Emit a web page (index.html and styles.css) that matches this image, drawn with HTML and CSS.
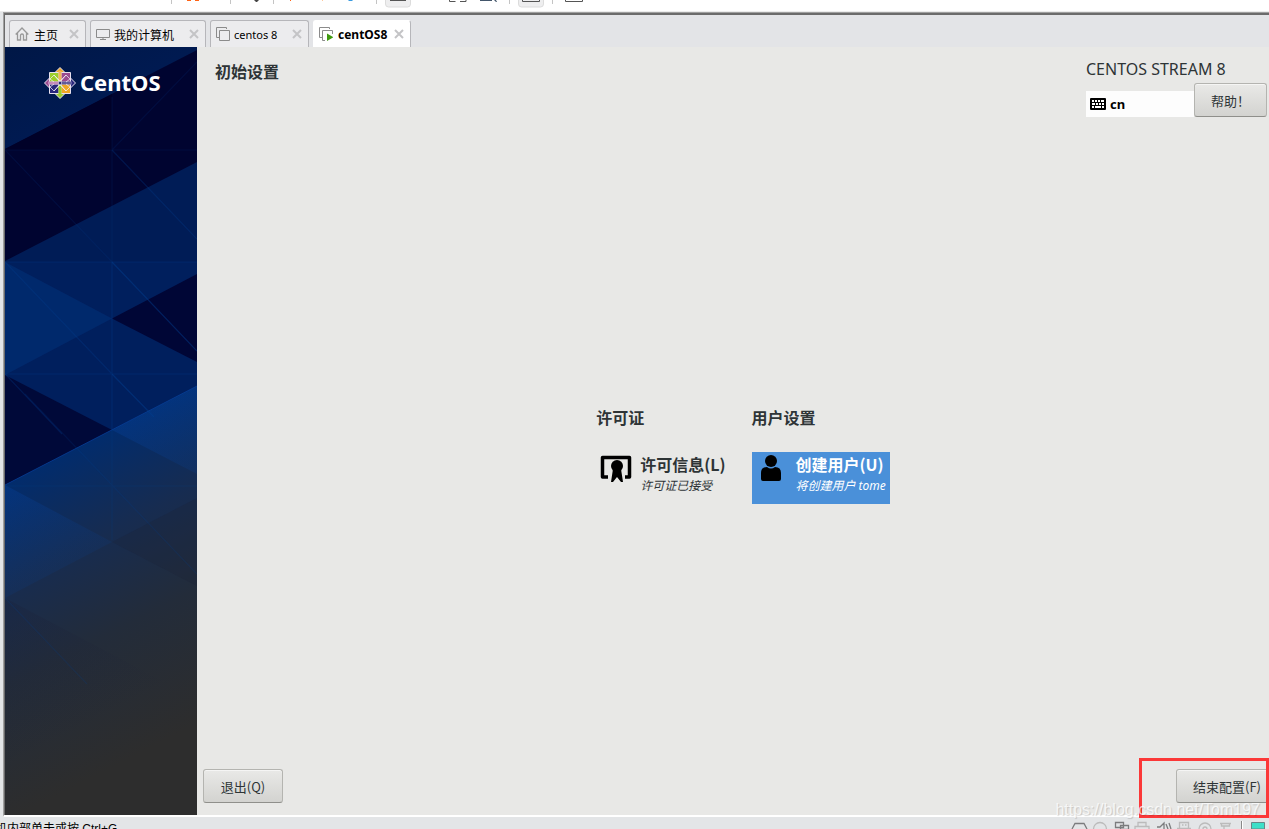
FILE: index.html
```html
<!DOCTYPE html>
<html lang="zh-CN">
<head>
<meta charset="utf-8">
<title>centOS8</title>
<link rel="stylesheet" href="styles.css">
</head>
<body>
<div class="toolbar">
<svg class="toolbar-icons" width="600" height="12" viewBox="0 0 600 12" aria-hidden="true">
<path d="M171.500 0v4M230.500 0v4M273.500 0v4M376.500 0v4M509.500 0v4M552.500 0v4" stroke="#c4c4c4"/>
<path d="M187 0h4v1h-4zM195 0h4v1h-4zM290 0h1v1h-1z" fill="#ff6315"/><path d="M322 0h1v1h-1z" fill="#ffc79b"/>
<path d="M254 0h5l-2 2h-1z" fill="#444"/><path d="M348 0h5l-1 1h-3z" fill="#3a9be0"/>
<path d="M385.500-4V4q0 3 3 3h19q3 0 3-3v-8zM518.500-4V4q0 3 3 3h19q3 0 3-3v-8z" fill="#eeeeef" stroke="#dcdcdc"/>
<path d="M390 .5h16M522.500-3v4.500h17v-4.500M565.500-3v4.500h17v-4.500M449.500-1v2.500h6M460 1.500h6v-2.500" fill="none" stroke="#555"/>
<path d="M480 0h12v1h-12zM494 0h2l1 2h-1z" fill="#43566b"/>
</svg>
</div>
<div class="frame">
<nav class="tabs" aria-label="虚拟机">
<div class="tab">
<svg width="14" height="14" viewBox="0 0 14 14" aria-hidden="true"><path d="M.7 7.500 7 1l6.300 6.500M2.500 6v7h3V8.500q0-1.500 1.500-1.500t1.500 1.500V13h3V6" fill="none" stroke="#999" stroke-width="1.300"/></svg>
<a href="#" class="tab-label">主页</a><button class="close" aria-label="关闭"><svg width="10" height="10" viewBox="0 0 10 10"><path d="m1 1 8 8M9 1 1 9"/></svg></button>
</div>
<div class="tab tab-computer">
<svg width="14" height="14" viewBox="0 0 14 14" aria-hidden="true"><path d="M.5 2.500h13v8H.5zM4 12.500h6M7 10.500v2" fill="none" stroke="#8b8b8b"/></svg>
<a href="#" class="tab-label">我的计算机</a><button class="close" aria-label="关闭"><svg width="10" height="10" viewBox="0 0 10 10"><path d="m1 1 8 8M9 1 1 9"/></svg></button>
</div>
<div class="tab tab-vm">
<svg width="14" height="14" viewBox="0 0 14 14" aria-hidden="true"><path d="M3 10.500H.5V.500h10V2M3.500 3.500h10v10h-10z" fill="none" stroke="#8b8b8b"/></svg>
<a href="#" class="tab-label">centos 8</a><button class="close" aria-label="关闭"><svg width="10" height="10" viewBox="0 0 10 10"><path d="m1 1 8 8M9 1 1 9"/></svg></button>
</div>
<div class="tab tab-active">
<svg width="14" height="14" viewBox="0 0 14 14" aria-hidden="true"><path d="M3 10.500H.5V.500h10V2M6 13.500H3.500v-10h10V7" fill="none" stroke="#8b8b8b"/><path d="m8 6.500 6.500 3.700L8 14z" fill="#3f9a0f"/></svg>
<a href="#" class="tab-label" aria-current="page">centOS8</a><button class="close" aria-label="关闭"><svg width="10" height="10" viewBox="0 0 10 10"><path d="m1 1 8 8M9 1 1 9"/></svg></button>
</div>
</nav>
<div class="screen">
<aside class="sidebar">
<svg class="backdrop" viewBox="0 0 192 768" preserveAspectRatio="none" aria-hidden="true">
<defs>
<linearGradient id="fade" gradientUnits="userSpaceOnUse" x1="0" y1="438" x2="137" y2="705"><stop offset="0" stop-color="#022c6c"/><stop offset=".3" stop-color="#172c50"/><stop offset=".6" stop-color="#232c3a"/><stop offset="1" stop-color="#2d2d2d"/></linearGradient>
<linearGradient id="glow" gradientUnits="userSpaceOnUse" x1="0" y1="438" x2="92" y2="616"><stop offset="0" stop-color="#0745a4" stop-opacity=".3"/><stop offset="1" stop-color="#0b3b7a" stop-opacity="0"/></linearGradient>
<linearGradient id="shade" gradientUnits="userSpaceOnUse" x1="0" y1="551" x2="70" y2="687"><stop offset="0" stop-color="#1b1e35" stop-opacity=".25"/><stop offset="1" stop-color="#1b1e35" stop-opacity="0"/></linearGradient>
<linearGradient id="top" x2="1" y2="1"><stop offset="0" stop-color="#001746"/><stop offset="1" stop-color="#001d5c"/></linearGradient>
</defs>
<path d="M0 0h192v768H0z" fill="#000430"/>
<path d="M0 0h192v3L0 102z" fill="url(#top)"/>
<path d="M0 102 107 47v56H0z" fill="#000128"/>
<path d="M0 214 192 115v120L0 440z" fill="#001c56"/>
<path d="M0 215h192v224H0z" fill="#001f5d"/>
<path d="m0 215 107 56.500L0 328z" fill="#00296c"/>
<path d="m107 271.500 85-44.500v88z" fill="#000636"/>
<path d="m0 328 107 55L0 438z" fill="#000939"/>
<path d="M0 438 192 339v429H0z" fill="url(#fade)"/>
<path d="m0 438 107 57L0 551zM107 383l85-44v88z" fill="url(#glow)"/>
<path d="m107 495 85-44v88z" fill="#1b1e35" opacity=".25"/>
<path d="M0 551l192 101v116H0z" fill="url(#shade)"/>
<path d="M0 438 192 339" stroke="#08409a" opacity=".7"/>
<g fill="none" stroke="#004090" stroke-width="1.200"><path d="M107 50v165M0 103h192M107 103 192 15M0 103l107 112" opacity=".16"/><path d="m107 103 85 89M107 215v168M0 215h192M0 215l107 112M0 327h192M0 327l57 60" opacity=".3"/><path d="m107 215 85 89M107 327l42 43" opacity=".45"/><path d="m20 347 172 180M0 439h192M107 383v110M0 551l82 86" opacity=".18"/></g>
</svg>
<div class="brand">
<svg width="32" height="32" viewBox="0 0 32 32" aria-hidden="true">
<g stroke="#e6e0ee" stroke-width="1"><path d="m16 .5 6 6H10z" fill="#efa724"/><path d="m31.500 16-6 6V10z" fill="#29277b"/><path d="m16 31.500-6-6h12z" fill="#9ccd2a"/><path d="m.5 16 6-6v12z" fill="#9b4b90"/>
<path d="M5.500 5.500H15V15H5.500z" fill="#9ccd2a"/><path d="M17 5.500h9.500V15H17z" fill="#9b4b90"/><path d="M5.500 17H15v9.500H5.500z" fill="#29277b"/><path d="M17 17h9.500v9.500H17z" fill="#efa724"/></g>
<path d="M14.500 4h3v10.500h-3z" fill="#f2b45c"/><path d="M14.500 17.500h3V28h-3z" fill="#9ccd2a"/><path d="M4 14.500h10.500v3H4z" fill="#c58abb"/><path d="M17.500 14.500H28v3H17.500z" fill="#605b9c"/>
<path d="m6 12 4-4 6 6 6-6 4 4-4 3M6 20l4 4 6-6 6 6 4-4-4-3M10 8l5 6M22 8l-5 6M10 24l5-6M22 24l-5-6M10 15l-4-3M10 17l-4 3" fill="none" stroke="#f0ecf4" stroke-width=".9" opacity=".85"/><path d="M14.500 14.500h3v3h-3z" fill="#29277b" stroke="#e6e0ee" stroke-width=".6"/>
</svg>
<span class="brand-name">CentOS</span>
</div>
</aside>
<main class="setup">
<header class="setup-head">
<h1 class="title">初始设置</h1>
<div class="release">
<div class="release-name">CENTOS STREAM 8</div>
<div class="release-tools">
<button class="keyboard"><svg width="16" height="12" viewBox="0 0 16 12" aria-hidden="true"><rect width="16" height="12" rx="1"/><path d="M2 3h2m1 0h2m1 0h2m1 0h3M2 6h3m1 0h2m1 0h2m1 0h2M2 9h2m1 0h6m1 0h2" stroke="#fff" stroke-width="2"/></svg>cn</button>
<button class="btn btn-help">帮助！</button>
</div>
</div>
</header>
<div class="hub">
<section>
<h2 class="group">许可证</h2>
<button class="spoke">
<svg width="32" height="32" viewBox="0 0 32 32" aria-hidden="true"><path d="M8 25H2.500V5.500h27V25H25" fill="none" stroke="#000" stroke-width="3.500" stroke-linejoin="round"/><circle cx="17" cy="14" r="6"/><path d="M13 17h8l2 13h-2l-4-5-4 5h-2z"/></svg>
<span class="spoke-text"><span class="spoke-name">许可信息(L)</span><em class="spoke-status">许可证已接受</em></span>
</button>
</section>
<section>
<h2 class="group">用户设置</h2>
<button class="spoke spoke-selected">
<svg width="32" height="32" viewBox="0 0 32 32" aria-hidden="true"><circle cx="15" cy="9" r="6"/><path d="M5 27v-6q0-6 6-6 4 3 8 0 6 0 6 6v6q0 2-2 2H7q-2 0-2-2z"/></svg>
<span class="spoke-text"><span class="spoke-name">创建用户(U)</span><em class="spoke-status">将创建用户 tome</em></span>
</button>
</section>
</div>
<footer class="actions">
<button class="btn btn-quit">退出(Q)</button>
<button class="btn btn-finish">结束配置(F)</button>
</footer>
</main>
</div>
</div>
<div class="status">
<span class="status-text">机内部单击或按 Ctrl+G</span>
<svg class="status-icons" width="200" height="12" viewBox="0 0 200 12" aria-hidden="true">
<g fill="none" stroke="#7c7c7e" stroke-width="1.300"><path d="m3 12 3-5.500h9l3 5.500M46.500 5.500h8v5h-8zM51.500 8.500h8v4h-8z"/><path d="m88 10 3 0 4-4v7M97 7l2 5M100 6l2 6"/></g>
<g fill="none" stroke="#bbb" stroke-width="1.300"><circle cx="31" cy="12" r="6.500"/><path d="M69 9V5.500h8V9M66 12V9.500h14V12M110.500 12V5.500h9V12M108 11.500h14M113 8h1.500M116 8h1.500M151 6.500h11M152.500 6.500V9h8V6.500M155 9v3"/><circle cx="136" cy="12" r="6"/><circle cx="136" cy="12" r="2"/></g>
<path d="M172.500 4v8" stroke="#888"/><path d="M173.500 4v8" stroke="#fff"/><path d="M182.500 5.500h13V12h-13z" fill="#3de0c8" stroke="#688"/>
</svg>
</div>
<div class="highlight"></div>
<div class="watermark">https://blog.csdn.net/Tom197</div>
</body>
</html>
```
FILE: styles.css
```css
* { box-sizing: border-box; }
body {
  margin: 0;
  height: 100vh;
  display: flex;
  flex-direction: column;
  position: relative;
  overflow: hidden;
  background: #e3e5e7;
  color: #2e3436;
  font-family: "Noto Sans", "Noto Sans CJK SC", sans-serif;
}
button { font: inherit; color: inherit; border: 0; background: none; padding: 0; }
svg { display: block; flex: none; }
h1, h2 { margin: 0; }

.toolbar { height: 12px; flex: none; background: #fff; border-bottom: 1px solid #ececec; }
.frame {
  flex: 1;
  min-height: 0;
  display: flex;
  flex-direction: column;
  margin-left: 3px;
  border-top: 1px solid #a0a0a0;
  border-left: 1px solid #a0a0a0;
  border-bottom: 2px solid #fff;
}
.tabs {
  display: flex;
  gap: 4px;
  flex: none;
  height: 34px;
  padding: 5px 0 0 4px;
  border-top: 2px solid #6b6b6b;
  border-left: 1px solid #6b6b6b;
  background: #e3e4e7;
}
.tab {
  display: flex;
  align-items: center;
  gap: 5px;
  width: 77px;
  padding: 0 6px 0 5px;
  border: 1px solid #b6b6ba;
  border-bottom: 0;
  border-radius: 3px 3px 0 0;
  background: #ececee;
  font: 12px "Noto Sans CJK SC", sans-serif;
}
.tab-computer { width: 116px; gap: 4px; }
.tab-vm { width: 99px; gap: 4px; font: 11px "Noto Sans", sans-serif; }
.tab-active { width: 98px; background: #fff; border-color: #fff #b6b6ba #fff #fff; font: bold 12px "Noto Sans", sans-serif; }
.tab-label { color: #000; text-decoration: none; white-space: nowrap; }
.close { margin-left: auto; }
.close path { stroke: #c4c4c6; stroke-width: 2; }

.screen { flex: 1; min-height: 0; display: flex; border-left: 1px solid #6b6b6b; }
.sidebar { position: relative; flex: none; width: 192px; padding: 20px 0 0 39px; }
.backdrop { position: absolute; inset: 0; width: 100%; height: 100%; }
.brand { position: relative; display: flex; align-items: center; gap: 4px; height: 32px; }
.brand-name { color: #fff; font: bold 22px/28px "Noto Sans", sans-serif; padding-bottom: 2px; }

.setup { flex: 1; min-width: 0; display: flex; flex-direction: column; background: #e8e8e6; }
.setup-head { display: flex; justify-content: space-between; padding: 12px 2px 0 18px; }
.title, .group { font: bold 16px/24px "Noto Sans CJK SC", sans-serif; }
.release-name { font: 16px/20px "Noto Sans", sans-serif; white-space: nowrap; }
.release-tools { display: flex; align-items: flex-end; margin-top: 4px; }
.keyboard {
  display: flex;
  align-items: center;
  gap: 4px;
  width: 108px;
  height: 26px;
  padding: 0 4px;
  background: #fdfdfd;
  color: #000;
  font: bold 13px/18px "Noto Sans", sans-serif;
}
.btn {
  height: 34px;
  padding: 0 16px;
  border: 1px solid #b4b4b0;
  border-bottom-color: #8f8f8b;
  border-radius: 3px;
  background: linear-gradient(#e9e9e7, #d3d3d0);
  box-shadow: inset 0 1px #f5f5f4;
  font: 13px "Noto Sans CJK SC", sans-serif;
  white-space: nowrap;
}
.btn-help { width: 73px; }
.btn-quit { width: 80px; }

.hub { flex: 1; display: flex; justify-content: center; align-items: center; gap: 22px; padding: 22px 0 0 20px; }
.group { margin-bottom: 23px; }
.spoke { display: flex; gap: 8px; height: 52px; padding: 0 4px; text-align: left; }
.spoke-selected { background: #4a90d9; color: #fff; }
.spoke-selected svg { fill: #000; }
.spoke-text { display: flex; flex-direction: column; white-space: nowrap; }
.spoke-name { font: bold 16px/24px "Noto Sans CJK SC", sans-serif; }
.spoke-status { font: italic 12px/20px "Noto Sans", "Noto Sans CJK SC", sans-serif; }

.actions { display: flex; justify-content: space-between; padding: 0 0 12px 6px; }
.btn-finish { border-radius: 3px 0 0 3px; padding: 0 7px 0 16px; }

.status { flex: none; display: flex; justify-content: space-between; height: 12px; overflow: hidden; }
.status-text { margin-left: -5px; padding-top: 3px; color: #000; font: 12px/18px "Liberation Sans", "Noto Sans CJK SC", sans-serif; }
.highlight { position: absolute; right: 0; bottom: 11px; width: 130px; height: 60px; border: 3px solid #fb3838; }
.watermark {
  position: absolute;
  right: 9px;
  bottom: 9px;
  color: rgba(255, 255, 255, 0.75);
  font: 16px/20px "Liberation Sans", sans-serif;
  text-shadow: 1px 1px 1px rgba(0, 0, 0, 0.15);
}
```
